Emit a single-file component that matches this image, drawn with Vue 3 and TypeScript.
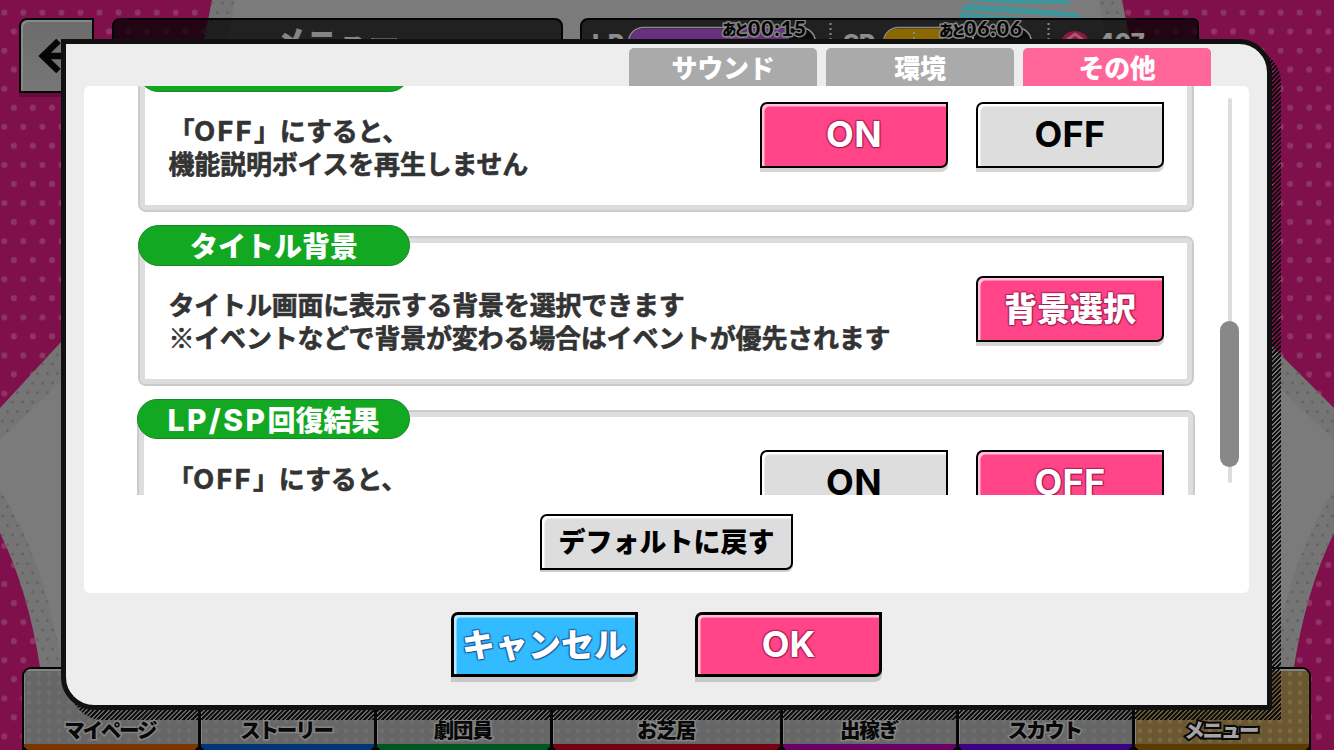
<script setup lang="ts">
interface OptionButton { label: string; tone: 'pink' | 'gray' }
interface OptionCard { title: string; latin: string; lines: { latin?: string; pre?: string; text: string }[]; buttons: OptionButton[]; shift?: boolean }

const tabs = [
  { label: 'サウンド', active: false },
  { label: '環境', active: false },
  { label: 'その他', active: true },
]

const cards: OptionCard[] = [
  {
    title: '', latin: '',
    lines: [{ pre: '「', latin: 'OFF', text: '」にすると、' }, { text: '機能説明ボイスを再生しません' }],
    buttons: [{ label: 'ON', tone: 'pink' }, { label: 'OFF', tone: 'gray' }],
  },
  {
    title: 'タイトル背景', latin: '',
    lines: [{ text: 'タイトル画面に表示する背景を選択できます' }, { text: '※イベントなどで背景が変わる場合はイベントが優先されます' }],
    buttons: [{ label: '背景選択', tone: 'pink' }],
  },
  {
    title: '回復結果', latin: 'LP/SP', shift: true,
    lines: [{ pre: '「', latin: 'OFF', text: '」にすると、' }],
    buttons: [{ label: 'ON', tone: 'gray' }, { label: 'OFF', tone: 'pink' }],
  },
]

const nav = [
  { label: 'マイページ', cls: 'orange' },
  { label: 'ストーリー', cls: 'blue' },
  { label: '劇団員', cls: 'green' },
  { label: 'お芝居', cls: 'red' },
  { label: '出稼ぎ', cls: 'purple' },
  { label: 'スカウト', cls: 'violet' },
  { label: 'メニュー', cls: 'brown' },
]

const isLatin = (s: string) => /^[A-Z]+$/.test(s)
</script>

<template>
  <div class="screen">
    <svg class="backdrop" width="1334" height="750" viewBox="0 0 1334 750">
      <defs>
        <pattern id="dots" width="19.05" height="38.1" patternUnits="userSpaceOnUse" x="-5.2" y="3">
          <circle cx="9.5" cy="9.5" r="3" fill="#8e3563" />
          <circle cx="0" cy="28.5" r="3" fill="#8e3563" />
          <circle cx="19.05" cy="28.5" r="3" fill="#8e3563" />
        </pattern>
        <pattern id="fine" width="10" height="19" patternUnits="userSpaceOnUse">
          <circle cx="2.5" cy="3" r="1.5" fill="#636363" />
          <circle cx="7.5" cy="12.5" r="1.5" fill="#636363" />
        </pattern>
      </defs>
      <rect width="1334" height="750" fill="#80104c" />
      <rect width="1334" height="750" fill="url(#dots)" />
      <path d="M212 0L200 60Q170 240 61 342L0 408V533Q28 590 40 667L50 750H1284L1294 667Q1306 590 1334 533V408L1281 355Q1164 240 1134 60L1122 0Z" fill="#757575" />
      <path d="M212 0L200 60Q170 240 61 342L0 408V533Q28 590 40 667L50 750H1284L1294 667Q1306 590 1334 533V408L1281 355Q1164 240 1134 60L1122 0Z" fill="url(#fine)" />
      <path d="M235 0L225 60Q170 280 61 381L0 440V490Q45 560 62 667V750H1272V667Q1289 560 1334 490V440L1273 381Q1164 280 1109 60L1099 0Z" fill="#7b7b7b" />
      <path d="M970 0H1068L1071 4L1020 4L968 1ZM965 4L1040 9L1078 13L1080 18L1040 15L961 10ZM960 12L1030 18H959Z" fill="#3f9499" />
    </svg>

    <div class="back">
      <svg width="40" height="36" viewBox="0 0 40 36"><path d="M21.500 3L6 18L21.500 33M6 18H36" fill="none" stroke="#050505" stroke-width="6.500" /></svg>
    </div>
    <div class="title-bar">メニュー</div>
    <div class="status-bar">
      <svg width="615" height="40" viewBox="582 20 615 40">
        <rect x="628.5" y="27.5" width="187" height="30" rx="15" fill="#0b0b0b" stroke="#8b8b8b" stroke-width="1.5" />
        <path d="M789 28.5H643a14 14 0 0 0 -14 14V58H789Z" fill="#67317f" />
        <rect x="883.5" y="27.5" width="148" height="30" rx="15" fill="#0b0b0b" stroke="#8b8b8b" stroke-width="1.5" />
        <path d="M943 28.5H898a14 14 0 0 0 -14 14V58H943Z" fill="#8a6a00" />
        <path d="M830.5 23V44M1048.5 23V44M914 32V44M973 32V44" stroke="#8a8a8a" stroke-width="2" stroke-dasharray="2 3" />
        <ellipse cx="1075" cy="41" rx="13" ry="10" fill="#8c1740" />
        <path d="M1067 40L1075 34L1083 40" fill="none" stroke="#ad5870" stroke-width="3" />
        <g font-family="Inter" font-weight="800" font-size="25" fill="#8d8d8d">
          <text x="592" y="51.5" textLength="32">LP</text>
          <text x="843" y="51.5" textLength="32">SP</text>
          <text x="1098" y="51" textLength="47" lengthAdjust="spacingAndGlyphs">407</text>
        </g>
        <g font-family="Lato, 'Noto Sans CJK JP'" font-weight="900" fill="#050505" stroke="#858585" stroke-width="3" paint-order="stroke" stroke-linejoin="round">
          <text x="722" y="35" font-size="15" textLength="27" font-family="'Noto Sans CJK JP'">あと</text>
          <text x="748" y="35.5" font-size="21" textLength="58">00:15</text>
          <text x="939" y="36" font-size="15" textLength="27" font-family="'Noto Sans CJK JP'">あと</text>
          <text x="964" y="35.5" font-size="21" textLength="58">06:06</text>
        </g>
      </svg>
    </div>

    <nav class="nav">
      <div v-for="n in nav" :key="n.label" class="cell" :class="n.cls"><span>{{ n.label }}</span><i></i></div>
    </nav>

    <div class="hatch"></div>
    <section class="modal">
      <div class="tabs">
        <div v-for="t in tabs" :key="t.label" class="tab" :class="{ active: t.active }">{{ t.label }}</div>
      </div>
      <div class="panel">
        <div class="scroller">
          <div class="list">
            <article v-for="(c, i) in cards" :key="i" class="card" :class="{ shift: c.shift }">
              <h2 class="badge"><span v-if="c.latin" class="latin">{{ c.latin }}</span>{{ c.title }}</h2>
              <div class="copy">
                <p v-for="(l, j) in c.lines" :key="j">{{ l.pre }}<span v-if="l.latin" class="latin">{{ l.latin }}</span>{{ l.text }}</p>
              </div>
              <div class="actions">
                <button v-for="b in c.buttons" :key="b.label" class="btn" :class="[b.tone, { word: isLatin(b.label) }]">{{ b.label }}</button>
              </div>
            </article>
          </div>
          <div class="track"><div class="thumb"></div></div>
        </div>
        <button class="btn gray reset">デフォルトに戻す</button>
      </div>
      <footer class="foot">
        <button class="btn big blue">キャンセル</button>
        <button class="btn big pink word">OK</button>
      </footer>
    </section>
  </div>
</template>

<style>
body { margin: 0; overflow: hidden; }
</style>

<style scoped>
* { box-sizing: border-box; }
.screen { position: relative; width: 1334px; height: 750px; overflow: hidden; font-family: "Noto Sans CJK JP", sans-serif; font-weight: 700; white-space: nowrap; }
.backdrop { position: absolute; left: 0; top: 0; }

.back { position: absolute; left: 19px; top: 18px; width: 75px; height: 75px; border: 2px solid #050505; border-radius: 8px 0 0 0; background: linear-gradient(#6c6c6c, #777); box-shadow: inset 2px 2px 0 #888, 0 4px 0 #650c3c; padding: 18px 0 0 16px; }
.title-bar { position: absolute; left: 112px; top: 18px; width: 451px; height: 60px; border: 2px solid #050505; border-radius: 8px 8px 0 0; background: rgba(0, 0, 0, .73); color: #858585; font-size: 31px; line-height: 40px; font-weight: 900; text-align: center; }
.status-bar { position: absolute; left: 580px; top: 18px; width: 619px; height: 44px; border: 2px solid #050505; border-radius: 8px 6px 0 0; background: rgba(0, 0, 0, .73); }

.nav { position: absolute; left: 22px; top: 667px; width: 1289px; height: 83px; display: grid; grid-template-columns: 176.5px 176px 176.5px 230px 176px 175.5px 1fr; border: 2px solid #050505; border-bottom: 0; border-radius: 9px 9px 0 0; overflow: hidden; background: #050505; }
.cell { --bar: #7a3600; display: flex; flex-direction: column; align-items: center; padding-top: 49px; border-right: 3px solid #050505; background: radial-gradient(circle, #6e6e6e 2px, transparent 2.6px) 0 0 / 10px 9.5px #666; box-shadow: inset 1px 2px 0 #858585; }
.cell:last-child { border-right: 0; }
.cell span { height: 26px; font-size: 20.5px; line-height: 22px; letter-spacing: -2.2px; margin-left: -2px; font-weight: 900; color: #080808; -webkit-text-stroke: 3px #858585; paint-order: stroke fill; }
.cell:nth-child(n+3):nth-child(-n+5) span { letter-spacing: -1.2px; margin-left: -1px; }
.cell i { width: 100%; height: 7px; background: linear-gradient(45deg, #050505 3px, transparent 3.5px), linear-gradient(-45deg, #050505 3px, transparent 3.5px), var(--bar); }
.cell.blue { --bar: #003674; }
.cell.green { --bar: #005524; }
.cell.red { --bar: #750012; }
.cell.purple { --bar: #6b0068; }
.cell.violet { --bar: #3b0084; }
.cell.brown { --bar: #5a3b00; background: radial-gradient(circle, #7d6940 2px, transparent 2.6px) 0 0 / 10px 9.5px #6b5732; }
.brown span { color: #a5a5a5; -webkit-text-stroke: 4px #080808; }

.hatch { position: absolute; left: 70px; top: 49px; width: 1211px; height: 671px; border-radius: 0 33px 0 33px; border-bottom-right-radius: 0; background: repeating-linear-gradient(135deg, #0c0c0c 0 1.5px, transparent 1.9px 2.9px, #0c0c0c 3.2px); }
.modal { position: absolute; left: 61px; top: 39px; width: 1211px; height: 671px; border: 5px solid #111; border-radius: 0 33px 0 33px; background: #ededed; padding: 4px 18px 0; }
.tabs { display: flex; justify-content: flex-end; gap: 9px; padding-right: 38px; }
.tab { width: 188px; height: 38px; border-radius: 5px 5px 0 0; background: #aaa; color: #fff; font-size: 26px; line-height: 38px; text-align: center; font-weight: 900; letter-spacing: -.3px; }
.tab.active { background: #f69; }
.panel { height: 507px; border-radius: 6px; background: #fff; display: flex; flex-direction: column; align-items: center; }
.scroller { width: 100%; height: 409px; overflow: hidden; display: flex; flex: none; }
.list { margin: -24px 0 0 54px; width: 1056px; display: flex; flex-direction: column; gap: 24px; flex: none; }
.card { position: relative; height: 150px; flex: none; border: 2px solid #cbcbcb; border-radius: 8px; box-shadow: inset 0 0 0 5px #ddd; background: #fff; display: flex; justify-content: space-between; padding: 49px 28px 0 28.5px; }
.card.shift { margin: 0 -1px; padding-right: 29px; }
.badge { position: absolute; left: -2px; top: -13px; width: 272px; height: 41px; margin: 0; border: 1.5px solid #15882a; border-radius: 21px; background: #13a822; color: #fff; font-size: 28px; line-height: 38px; font-weight: 900; text-align: center; }
.shift .badge { width: 273px; height: 40px; }
.copy { color: #333; font-size: 26px; letter-spacing: -.2px; -webkit-text-stroke: .6px #333; }
.copy p { margin: 0; height: 33px; line-height: 33px; }
.latin { font-family: Inter, sans-serif; font-weight: 700; font-size: 27px; letter-spacing: 2.4px; line-height: 1; }
.badge .latin { font-size: 30px; letter-spacing: 2.4px; font-weight: 800; }
.actions { display: flex; gap: 28px; margin-top: -11px; }
.btn { width: 188px; height: 66px; flex: none; padding: 0 0 4px; margin: 0; border: 2px solid #000; border-radius: 7px 0 7px 0; font: 900 33px/56px "Noto Sans CJK JP", sans-serif; color: #fff; display: block; }
.btn.word { font-family: Inter, sans-serif; font-weight: 700; font-size: 36px; padding-bottom: 0; line-height: 59px; }
.btn.word:not(.big) { letter-spacing: .4px; padding-bottom: 1px; }
.btn.pink { background: #ff4488; box-shadow: inset 2.5px 2.5px 0 #ffc0d8, 0 4px 0 #d5d5d5; text-shadow: 1px 1px 1px #a31c50, -1px -1px 1px #b82360, 1px -1px 1px #b82360, -1px 1px 1px #b82360; }
.btn.gray { background: #ddd; color: #000; box-shadow: inset 2.5px 2.5px 0 #fff, 0 4px 0 #d5d5d5; }
.btn.blue { background: #33bbff; box-shadow: inset 2.5px 2.5px 0 #c0e9ff, 0 5px 0 #c8c8c8; text-shadow: 1px 1px 1px #16569c, -1px -1px 1px #2063ab, 1px -1px 1px #2063ab, -1px 1px 1px #2063ab; }
.btn.big { width: 187px; height: 65px; border-width: 3px; }
.btn.big.pink { box-shadow: inset 2.5px 2.5px 0 #ffc0d8, 0 5px 0 #c8c8c8; }
.btn.reset { width: 253px; height: 56px; margin-top: 19px; font-size: 27px; line-height: 50px; padding-bottom: 2px; box-shadow: inset 2.5px 2.5px 0 #fff, 0 2px 0 #ccc; }
.track { width: 4px; height: 385px; margin: 12px 0 0 34px; background: #ddd; border-radius: 2px; display: flex; justify-content: center; flex: none; }
.thumb { width: 19px; height: 146px; margin: 223px 0 0 -1px; border-radius: 10px; background: #888; flex: none; }
.foot { display: flex; justify-content: center; gap: 57px; padding-top: 19px; }
</style>
